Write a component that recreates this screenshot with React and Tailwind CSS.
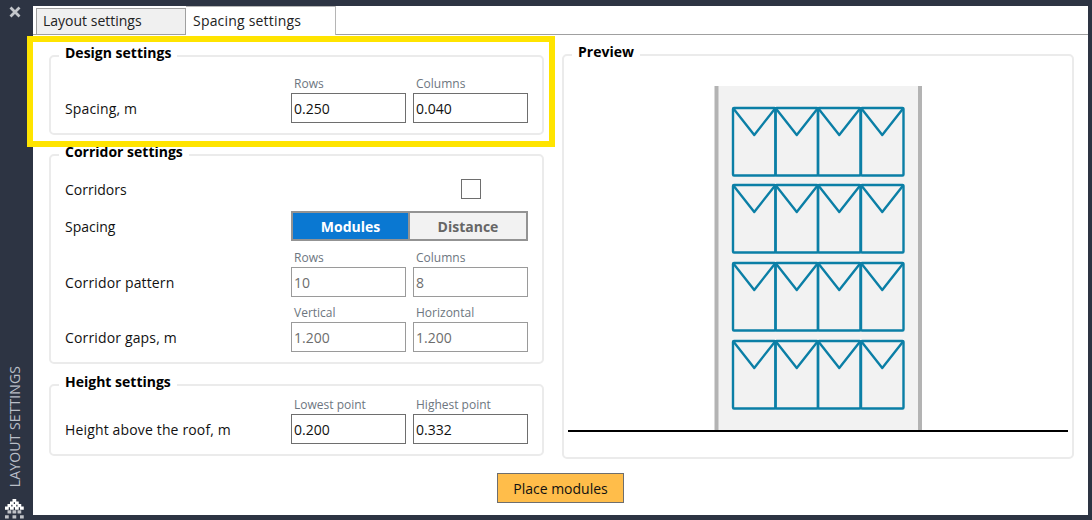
const font = { fontFamily: '"Open Sans","Noto Sans",sans-serif' };

function Field({ label, value, disabled, w = "w-[115px]" }) {
  return (
    <div className={`flex flex-col ${w}`}>
      <span className="text-[12px] leading-[14px] pl-[3px] h-[16px] text-[#6d7680]">{label}</span>
      <div className={`h-[30px] border flex items-center pl-[2px] text-[14px] ${disabled ? "border-[#9a9a9a] text-[#6d6d6d]" : "border-[#6e6e6e] text-[#111]"}`}>{value}</div>
    </div>
  );
}

function Group({ title, className, children }) {
  return (
    <section className={`border-2 border-[#ebebeb] rounded-[5px] ${className}`}>
      <h3 className="-mt-[14px] ml-[8px] w-fit bg-white px-[6px] text-[14px] leading-[20px] font-bold text-black">{title}</h3>
      {children}
    </section>
  );
}

function Row({ label, a, b, disabled, className = "" }) {
  return (
    <div className={`flex items-end ${className}`}>
      <span className="w-[240px] pl-[14px] pb-[4px] text-[14px] leading-[20px] text-[#111] tracking-[0.15px]">{label}</span>
      <div className="flex gap-[7px]">
        <Field label={a[0]} value={a[1]} disabled={disabled} />
        <Field label={b[0]} value={b[1]} disabled={disabled} />
      </div>
    </div>
  );
}

function Preview() {
  const xs = [733, 775.5, 818, 861];
  const ys = [108, 185, 263, 341];
  return (
    <svg width="508" height="403" viewBox="564 56 508 403" className="block">
      <rect x="716" y="86" width="204" height="344" fill="#f2f2f2" />
      <rect x="714.5" y="86" width="4" height="344" fill="#b3b3b3" />
      <rect x="918" y="86" width="4" height="344" fill="#b3b3b3" />
      {ys.map((y) =>
        xs.map((x) => (
          <g key={`${x}-${y}`} fill="none" stroke="#0b7fa6" strokeWidth="2.4" strokeLinejoin="round">
            <rect x={x} y={y} width="42.5" height="67.5" rx="1" />
            <path d={`M${x} ${y}L${x + 21.25} ${y + 27}L${x + 42.5} ${y}`} />
          </g>
        ))
      )}
      <rect x="568" y="430" width="500" height="2" fill="#000" />
    </svg>
  );
}

function Logo() {
  const cells = [
    [6, 0, 1], [4, 2, 1], [8, 2, 1], [2, 4, 1], [6, 4, 1], [10, 4, 1], [0, 6, 1], [4, 6, 1], [8, 6, 1], [12, 6, 1],
    [2, 9, 0.7], [6, 9, 0.7], [10, 9, 0.7], [0, 13, 0.7], [6, 13, 0.7], [12, 13, 0.7],
  ];
  return (
    <svg width="20" height="20" viewBox="0 0 16 16" className="block">
      {cells.map(([x, y, o], i) => <rect key={i} x={x} y={y} width="3" height="2.6" fill="#fff" opacity={o} />)}
    </svg>
  );
}

export default function App() {
  return (
    <div style={font} className="relative flex w-[1092px] h-[520px] bg-[#2d3443] overflow-hidden">
      <aside className="w-[33px] shrink-0 flex flex-col items-center pr-[3px]">
        <svg width="12" height="12" viewBox="0 0 12 12" className="mt-[6px] block">
          <path d="M1.5 1.5L10.5 10.5M10.5 1.5L1.5 10.5" stroke="#c3c6cb" strokeWidth="2.8" />
        </svg>
        <span className="mt-auto [writing-mode:vertical-rl] rotate-180 text-[14px] leading-[16px] text-[#b9bec7] tracking-[0.1px]">LAYOUT SETTINGS</span>
        <div className="mt-[12px] mb-[1px]"><Logo /></div>
      </aside>

      <main className="flex-1 mt-[6px] mb-[5px] mr-[4px] bg-white flex flex-col min-w-0 text-[#111]">
        <div className="h-[29px] shrink-0 flex items-end border-b border-[#a0a0a0] pl-[3px]">
          <div className="w-[150px] h-[26px] border border-b-0 border-[#a0a0a0] bg-[#f0f0f0] pl-[6px] text-[14px] leading-[24px] text-[#222]">Layout settings</div>
          <div className="w-[150px] h-[29px] -mb-[1px] border border-l-0 border-b-0 border-[#b5b5b5] bg-white pl-[7px] text-[14px] leading-[28px] text-[#222] tracking-[0.2px]">Spacing settings</div>
        </div>

        <div className="flex-1 flex pl-[16px] pt-[20px]">
          <div className="w-[495px] flex flex-col">
            <Group title="Design settings" className="h-[80px]">
              <Row label="Spacing, m" a={["Rows", "0.250"]} b={["Columns", "0.040"]} className="mt-[14px]" />
            </Group>
            <Group title="Corridor settings" className="h-[210px] mt-[19px]">
              <div className="flex items-center h-[32px] mt-[11px]">
                <span className="pl-[14px] text-[14px] text-[#111]">Corridors</span>
                <div className="ml-auto mr-[61px] w-[20px] h-[20px] border border-[#6e6e6e]"></div>
              </div>
              <div className="flex items-center mt-[6px]">
                <span className="w-[240px] pl-[14px] text-[14px] text-[#111]">Spacing</span>
                <div className="flex w-[237px] h-[30px] border-2 border-[#939393]">
                  <div className="w-[117px] bg-[#0a78d2] border-r-2 border-[#939393] flex items-center justify-center text-[14px] font-bold text-white">Modules</div>
                  <div className="flex-1 bg-[#f2f2f2] flex items-center justify-center text-[14px] font-bold text-[#666]">Distance</div>
                </div>
              </div>
              <Row disabled label="Corridor pattern" a={["Rows", "10"]} b={["Columns", "8"]} className="mt-[10px]" />
              <Row disabled label="Corridor gaps, m" a={["Vertical", "1.200"]} b={["Horizontal", "1.200"]} className="mt-[9px]" />
            </Group>
            <Group title="Height settings" className="h-[72px] mt-[20px]">
              <Row label="Height above the roof, m" a={["Lowest point", "0.200"]} b={["Highest point", "0.332"]} className="mt-[6px]" />
            </Group>
          </div>

          <div className="ml-[18px]">
            <Group title="Preview" className="w-[512px] h-[405px] -mt-[1px]">
              <div className="-mt-[6px]"><Preview /></div>
            </Group>
          </div>
        </div>

        <div className="flex justify-center pb-[12px]">
          <button className="w-[127px] h-[30px] border border-[#6e6e6e] bg-[#ffbd4a] text-[14px] text-[#111]">Place modules</button>
        </div>
      </main>

      <div className="absolute left-[27px] top-[36px] w-[528px] h-[111px] border-[6px] border-[#ffe400] pointer-events-none"></div>
    </div>
  );
}
